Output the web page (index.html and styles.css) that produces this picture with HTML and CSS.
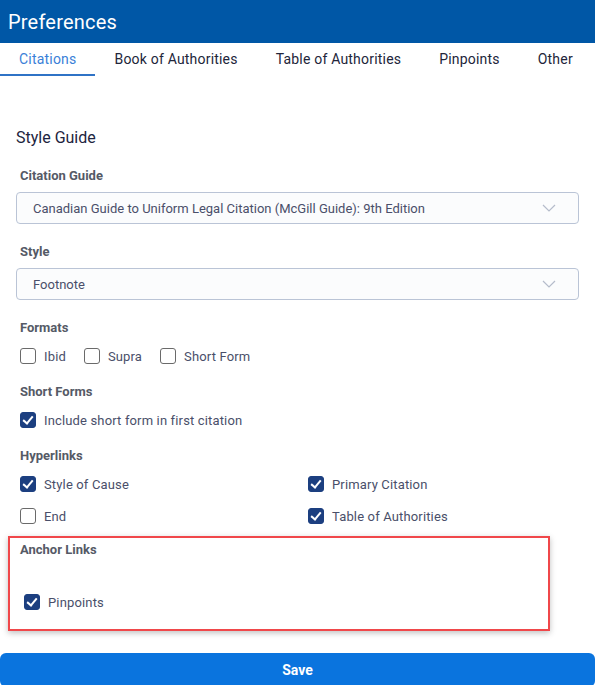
FILE: index.html
```html
<!DOCTYPE html>
<html lang="en">

<head>
  <title>Preferences</title>
  <meta charset="UTF-8">
  <meta name="viewport" content="width=device-width, initial-scale=1">
  <link rel="stylesheet" href="styles.css">
</head>

<body>

  <div class="header">Preferences</div>

  <div class="tabs">
    <div class="tab active">Citations</div>
    <div class="tab">Book of Authorities</div>
    <div class="tab">Table of Authorities</div>
    <div class="tab">Pinpoints</div>
    <div class="tab">Other</div>
  </div>

  <div class="content">
    <h3>Style Guide</h3>

    <div class="label">Citation Guide</div>
    <div class="select">
      <span>Canadian Guide to Uniform Legal Citation (McGill Guide): 9th Edition</span>
      <svg width="14" height="8" viewBox="0 0 14 8"><path d="M1 1l6 6 6-6" fill="none" stroke="#b5bccb" stroke-width="1.2"/></svg>
    </div>

    <div class="label">Style</div>
    <div class="select">
      <span>Footnote</span>
      <svg width="14" height="8" viewBox="0 0 14 8"><path d="M1 1l6 6 6-6" fill="none" stroke="#b5bccb" stroke-width="1.2"/></svg>
    </div>

    <div class="label">Formats</div>
    <div class="check-row">
      <label class="check"><span class="box"></span>Ibid</label>
      <label class="check"><span class="box"></span>Supra</label>
      <label class="check"><span class="box"></span>Short Form</label>
    </div>

    <div class="label">Short Forms</div>
    <div class="check-row">
      <label class="check"><span class="box on"></span>Include short form in first citation</label>
    </div>

    <div class="label">Hyperlinks</div>
    <div class="check-grid">
      <label class="check"><span class="box on"></span>Style of Cause</label>
      <label class="check"><span class="box on"></span>Primary Citation</label>
      <label class="check"><span class="box"></span>End</label>
      <label class="check"><span class="box on"></span>Table of Authorities</label>
    </div>

    <div class="highlight">
      <div class="label">Anchor Links</div>
      <label class="check"><span class="box on"></span>Pinpoints</label>
    </div>
  </div>

  <button class="save">Save</button>

</body>

</html>
```

FILE: styles.css
```css
body {
  font-family: Roboto, "Noto Sans", sans-serif;
  margin: 0;
  background: #ffffff;
  color: #3f4660;
}

.header {
  background: #0057a6;
  color: #ffffff;
  height: 43px;
  line-height: 44px;
  padding-left: 8px;
  font-size: 20px;
  letter-spacing: 0.2px;
}

.tabs {
  display: flex;
  height: 33px;
}

.tab {
  flex-shrink: 0;
  white-space: nowrap;
  padding: 2px 19px 0;
  line-height: 29px;
  font-size: 14px;
  letter-spacing: 0.2px;
  color: #22253a;
}

.tab.active {
  color: #3a7fd8;
  border-bottom: 2px solid #2f73c6;
}

.content {
  padding: 0 16px;
}

h3 {
  font-weight: 400;
  font-size: 16px;
  color: #1d2440;
  margin: 52px 0 0;
  line-height: 20px;
}

.label {
  font-size: 13px;
  font-weight: 700;
  color: #555a66;
  padding-left: 4px;
  margin-top: 20px;
  margin-bottom: 8px;
  line-height: 16px;
}

.select {
  display: flex;
  justify-content: space-between;
  align-items: center;
  height: 30px;
  border: 1px solid #bac4d6;
  border-radius: 4px;
  background: #fbfcfd;
  padding: 0 22px 0 16px;
  font-size: 13px;
  color: #4a4f6a;
}

.check-row {
  display: flex;
  padding: 4px 0 0 4px;
}

.check {
  display: flex;
  align-items: center;
  font-size: 13px;
  letter-spacing: 0.15px;
  color: #4a4f6a;
  height: 16px;
  margin-right: 18px;
}

.box {
  flex-shrink: 0;
  width: 14px;
  height: 14px;
  border: 1px solid #6a6a6a;
  border-radius: 3px;
  margin-right: 8px;
  position: relative;
}

.box.on {
  background: #1c3f80;
  border-color: #1c3f80;
}

.box.on::after {
  content: "";
  position: absolute;
  left: 4px;
  top: 1px;
  width: 4px;
  height: 8px;
  border: solid #ffffff;
  border-width: 0 2px 2px 0;
  transform: rotate(40deg);
}

.check-grid {
  display: grid;
  grid-template-columns: 288px 1fr;
  row-gap: 16px;
  padding: 4px 0 0 4px;
}

.highlight {
  margin: 12px 29px 0 -8px;
  border: 2px solid #f0474a;
  box-shadow: 0 2px 6px rgba(0, 0, 0, 0.25);
  padding: 4px 6px 19px;
}

.highlight .label {
  margin-top: 0;
  margin-bottom: 0;
}

.highlight .check {
  margin-top: 36px;
  padding-left: 8px;
}

.save {
  display: block;
  width: 100%;
  margin-top: 22px;
  height: 34px;
  border: none;
  border-radius: 6px;
  background: #0a74de;
  color: #ffffff;
  font-family: Roboto, sans-serif;
  font-weight: 700;
  font-size: 14px;
}
```
